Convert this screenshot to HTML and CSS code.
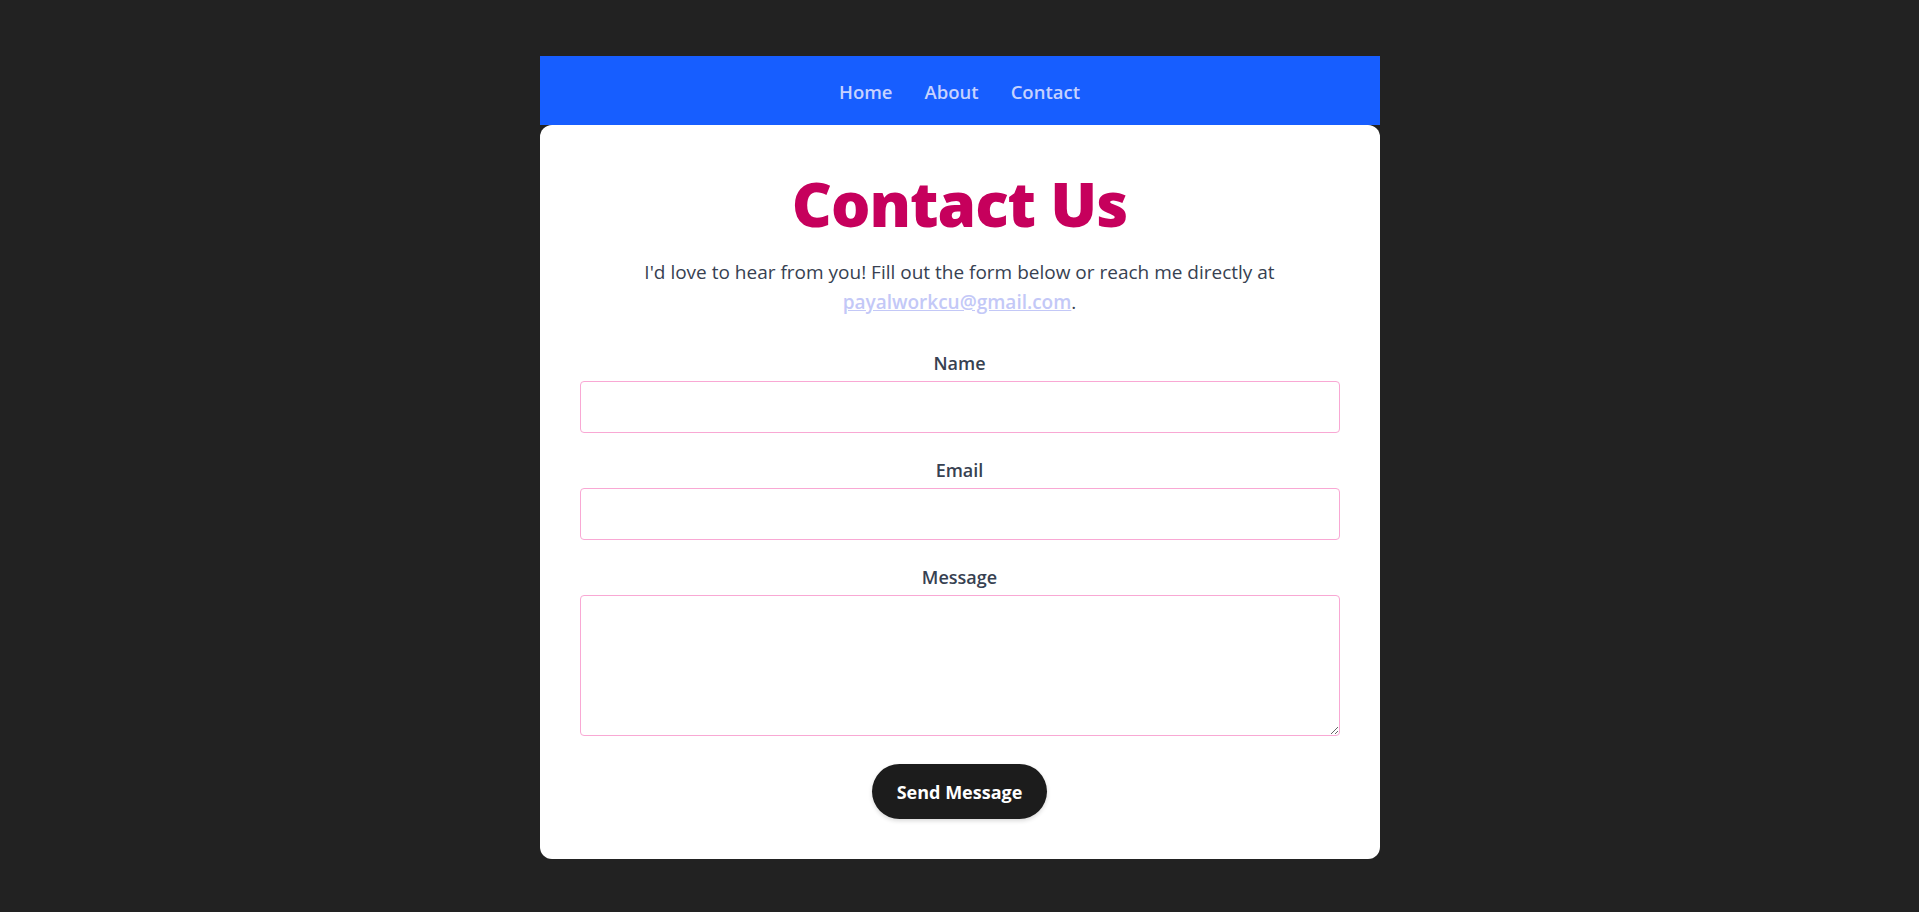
FILE: index.html
```html
<!DOCTYPE html>
<html lang="en">
<head>
<meta charset="utf-8">
<title>Contact</title>
<link rel="stylesheet" href="styles.css">
</head>
<body>
<div class="page">
  <nav class="nav">
    <a href="#" class="nav-link">Home</a>
    <a href="#" class="nav-link">About</a>
    <a href="#" class="nav-link">Contact</a>
  </nav>
  <main class="card">
    <h1 class="title">Contact Us</h1>
    <p class="intro">I'd love to hear from you! Fill out the form below or reach me directly at <a href="#" class="mail">payalworkcu@gmail.com</a>.</p>
    <form class="form">
      <div class="group">
        <label class="label" for="name">Name</label>
        <input class="field" id="name" type="text">
      </div>
      <div class="group">
        <label class="label" for="email">Email</label>
        <input class="field" id="email" type="email">
      </div>
      <div class="group">
        <label class="label" for="msg">Message</label>
        <textarea class="field area" id="msg"></textarea>
      </div>
      <div class="actions">
        <button type="button" class="btn">Send Message</button>
      </div>
    </form>
  </main>
</div>
</body>
</html>
```
FILE: styles.css
```css
* { box-sizing: border-box; }
html, body { margin: 0; padding: 0; }
body {
  background: #222222;
  font-family: "Open Sans", "Noto Sans", sans-serif;
  color: #374151;
}
.page {
  width: 840px;
  margin: 56px auto 0;
}
.nav {
  height: 69px;
  background: #175eff;
  display: flex;
  justify-content: center;
  align-items: center;
  gap: 32px;
}
.nav-link {
  color: #c7d2fe;
  text-decoration: none;
  font-size: 18.5px;
  font-weight: 600;
  padding-top: 2px;
}
.card {
  background: #ffffff;
  border-radius: 12px;
  padding: 40px 40px 40px;
  text-align: center;
}
.title {
  margin: 0;
  font-size: 62px;
  line-height: 76px;
  font-weight: 800;
  color: #c6005c;
  letter-spacing: -1px;
}
.intro {
  margin: 16px 0 33px;
  font-size: 19px;
  line-height: 30px;
  color: #374151;
}
.mail {
  color: #c3c8f7;
  font-weight: 600;
  text-decoration: underline;
}
.form { display: block; }
.group {
  display: flex;
  flex-direction: column;
  margin-bottom: 24px;
}
.label {
  font-size: 18px;
  font-weight: 600;
  line-height: 26px;
  margin-bottom: 5px;
  color: #374151;
}
.field {
  width: 100%;
  height: 52px;
  border: 1px solid #f9a8d4;
  border-radius: 4px;
  padding: 12px;
  font-size: 16px;
  font-family: inherit;
  background: #fff;
  outline: none;
}
.area {
  height: 141px;
  resize: vertical;
  display: block;
}
.actions {
  display: flex;
  justify-content: center;
  padding-top: 4px;
}
.btn {
  background: #1c1c1c;
  color: #ffffff;
  border: none;
  border-radius: 999px;
  height: 55px;
  padding: 0 25px;
  font-family: inherit;
  font-size: 18px;
  font-weight: 700;
  box-shadow: 0 2px 4px rgba(0,0,0,0.15);
  cursor: pointer;
}
```
